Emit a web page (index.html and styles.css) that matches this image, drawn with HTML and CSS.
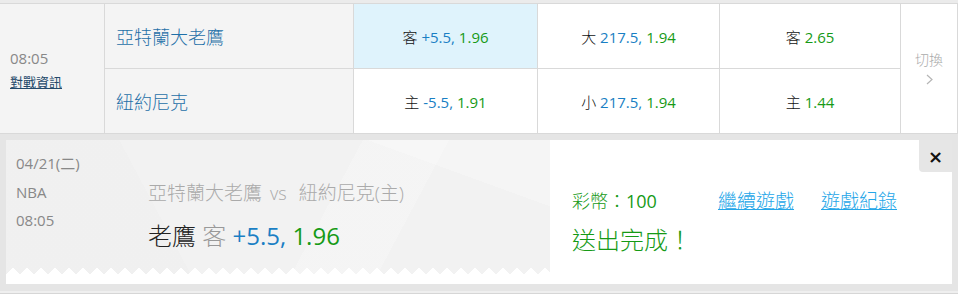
FILE: index.html
```html
<!DOCTYPE html>
<html lang="zh-Hant">
<head>
    <meta charset="UTF-8">
    <meta name="viewport" content="width=device-width, initial-scale=1.0">
    <title>投注單</title>
    <link rel="stylesheet" href="styles.css">
</head>
<body>
    <div class="board">
        <div class="strip"></div>

        <!-- Game row -->
        <div class="game">
            <div class="cell time-cell">
                <span class="time">08:05</span>
                <a class="info" href="#">對戰資訊</a>
            </div>
            <div class="cell team">亞特蘭大老鷹</div>
            <div class="cell odd picked"><span><span class="k">客</span> <span class="line">+5.5,</span> <span class="price">1.96</span></span></div>
            <div class="cell odd"><span><span class="k">大</span> <span class="line">217.5,</span> <span class="price">1.94</span></span></div>
            <div class="cell odd"><span><span class="k">客</span> <span class="price">2.65</span></span></div>
            <div class="cell switch">
                <span>切換</span>
                <svg class="chev" width="7" height="11" viewBox="0 0 7 11"><polyline points="1,1 6,5.5 1,10" fill="none" stroke="#b5b5b5" stroke-width="1.2"/></svg>
            </div>
            <div class="cell team">紐約尼克</div>
            <div class="cell odd"><span><span class="k">主</span> <span class="line">-5.5,</span> <span class="price">1.91</span></span></div>
            <div class="cell odd"><span><span class="k">小</span> <span class="line">217.5,</span> <span class="price">1.94</span></span></div>
            <div class="cell odd"><span><span class="k">主</span> <span class="price">1.44</span></span></div>
        </div>

        <!-- Bet slip -->
        <div class="slip-frame">
            <div class="slip">
                <div class="ticket">
                    <div class="meta">
                        <div>04/21(二)</div>
                        <div>NBA</div>
                        <div>08:05</div>
                    </div>
                    <div class="pick">
                        <div class="match">亞特蘭大老鷹<span class="vs">vs</span>紐約尼克(主)</div>
                        <div class="bet"><span class="who">老鷹</span> <span class="side">客</span> <span class="line">+5.5,</span> <span class="price">1.96</span></div>
                    </div>
                </div>
                <div class="result">
                    <div class="result-top">
                        <span class="coins">彩幣：<span class="num">100</span></span>
                        <a class="link" href="#">繼續遊戲</a>
                        <a class="link" href="#">遊戲紀錄</a>
                    </div>
                    <div class="done">送出完成！</div>
                </div>
                <button class="close">×</button>
            </div>
        </div>
        <div class="next"></div>
    </div>
</body>
</html>
```

FILE: styles.css
```css
body {
    font-family: "Open Sans", "Noto Sans CJK TC", sans-serif;
    margin: 0;
    padding: 0;
    background: #fff;
}
.board {
    width: 958px;
}
.strip {
    height: 3px;
    background-color: #ebebeb;
}
.game {
    display: grid;
    grid-template-columns: 104px 248px 183px 181px 180px 56px;
    grid-template-rows: 64px 64px;
    gap: 1px;
    padding: 1px 1px 1px 0;
    background-color: #d9d9d9;
}
.cell {
    background-color: #fff;
    display: flex;
    align-items: center;
}
.time-cell {
    grid-row: span 2;
    background-color: #f4f4f4;
    flex-direction: column;
    align-items: flex-start;
    justify-content: center;
    padding-left: 10px;
    padding-top: 2px;
}
.time {
    font-size: 15px;
    line-height: 20px;
    color: #888;
}
.info {
    margin-top: 5px;
    font-size: 13px;
    line-height: 18px;
    color: #24496b;
}
.team {
    background-color: #f4f4f4;
    padding-left: 11px;
    font-size: 18px;
    font-weight: 300;
    color: #1f70a8;
}
.odd {
    justify-content: center;
    font-size: 15px;
}
.picked {
    background-color: #dff3fc;
}
.k {
    color: #111;
    font-weight: 300;
}
.line {
    color: #1a7fc4;
}
.price {
    color: #169a16;
}
.switch {
    grid-column: 6;
    grid-row: 1 / span 2;
    flex-direction: column;
    justify-content: center;
    font-size: 14px;
    font-weight: 300;
    line-height: 20px;
    color: #aaa;
    padding-bottom: 2px;
}
.chev {
    margin-top: 4px;
}
.slip-frame {
    background-color: #e5e5e5;
    padding: 6px 6px 7px 6px;
}
.slip {
    position: relative;
    display: flex;
    height: 144px;
    background-color: #fff;
}
.ticket {
    position: relative;
    display: flex;
    width: 544px;
    height: 134px;
    background-color: #f2f2f2;
    background-image:
        linear-gradient(118deg, rgba(255,255,255,0) 58%, rgba(255,255,255,.2) 58%, rgba(255,255,255,.2) 72%, rgba(255,255,255,0) 72%),
        linear-gradient(62deg, rgba(0,0,0,.008) 30%, rgba(255,255,255,0) 30%),
        linear-gradient(200deg, rgba(255,255,255,.25) 20%, rgba(255,255,255,0) 20%);
}
.ticket::after {
    content: "";
    position: absolute;
    left: 0;
    right: 0;
    bottom: 0;
    height: 6px;
    background-image: conic-gradient(from 131deg at 50% 0, #fff 98deg, transparent 0);
    background-size: 14px 6px;
    background-repeat: repeat-x;
}
.meta {
    width: 132px;
    padding: 9px 0 0 10px;
    font-size: 15px;
    line-height: 28.5px;
    color: #888;
}
.pick {
    padding-top: 40px;
}
.match {
    font-size: 19px;
    font-weight: 300;
    line-height: 26px;
    color: #aaa;
}
.vs {
    margin: 0 12px 0 8px;
    font-size: 18px;
}
.bet {
    margin-top: 14px;
    font-size: 24px;
    line-height: 32px;
    white-space: pre;
}
.who {
    color: #222;
    font-weight: 300;
}
.side {
    color: #999;
    font-weight: 300;
}
.result {
    padding: 48px 0 0 22px;
}
.result-top {
    display: flex;
    align-items: center;
    font-size: 18px;
    font-weight: 300;
    line-height: 26px;
}
.coins {
    width: 146px;
    color: #169a16;
}
.num {
    font-weight: normal;
}
.link {
    color: #25a6e8;
    font-size: 19px;
    margin-right: 27px;
}
.done {
    margin-top: 10px;
    font-size: 24px;
    font-weight: 300;
    line-height: 32px;
    color: #169a16;
}
.close {
    position: absolute;
    top: 0;
    right: 0;
    width: 33px;
    height: 32px;
    border: 0;
    border-bottom-left-radius: 4px;
    background-color: #e6e6e6;
    font-family: "DejaVu Sans", sans-serif;
    font-size: 18px;
    font-weight: bold;
    color: #111;
    padding: 0;
    cursor: pointer;
}
.next {
    height: 2px;
    background-color: #efefef;
    border-bottom: 1px solid #d6d6d6;
}
```
